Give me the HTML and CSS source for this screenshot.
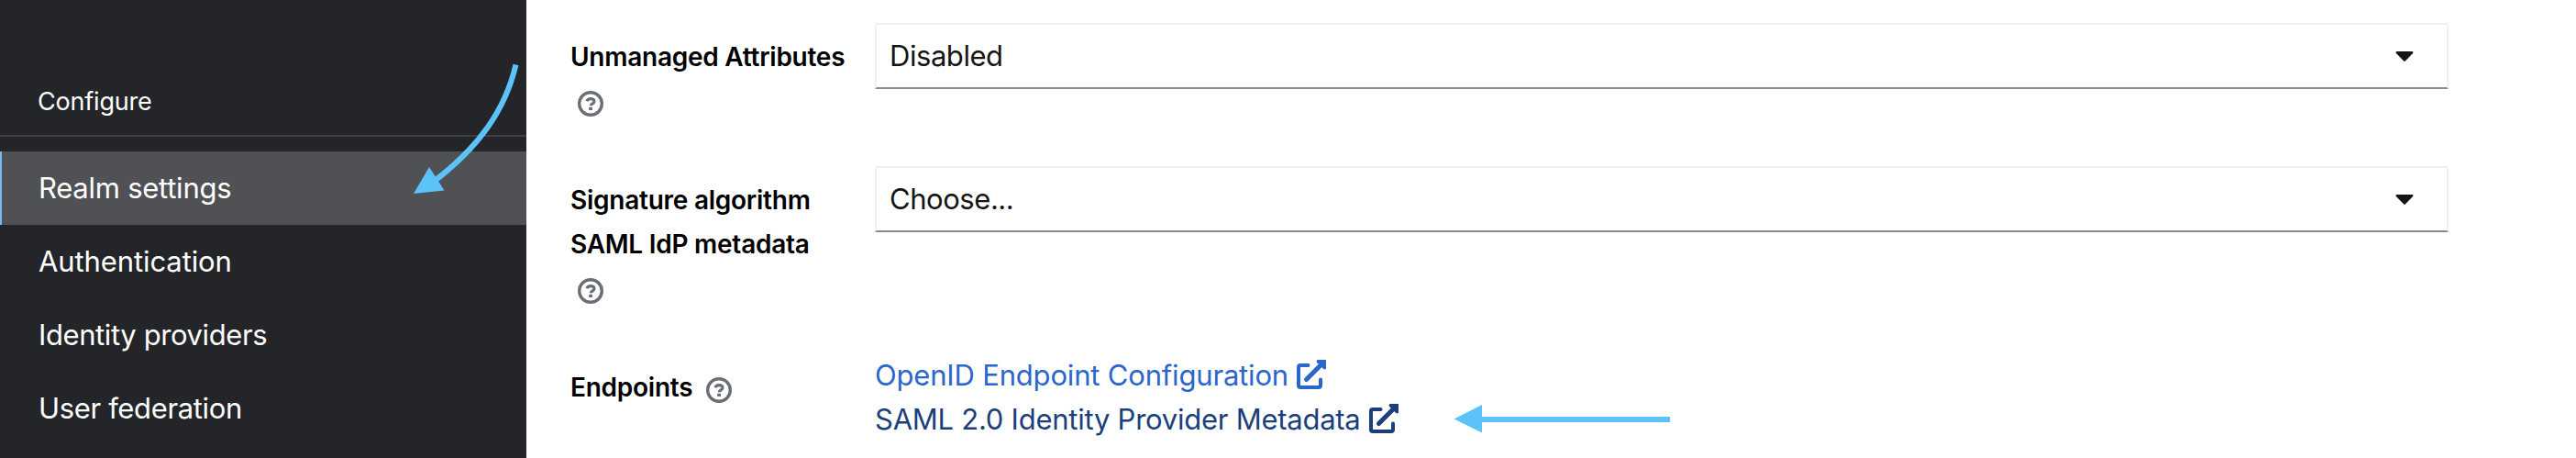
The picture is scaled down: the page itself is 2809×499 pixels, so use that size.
FILE: index.html
```html
<!DOCTYPE html>
<html lang="en">
<head>
    <meta charset="UTF-8">
    <meta name="viewport" content="width=device-width, initial-scale=1.0">
    <title>Realm settings</title>
    <link rel="stylesheet" href="styles.css">
</head>
<body>
    <!-- Shared icons -->
    <svg class="sprite" width="0" height="0">
        <symbol id="icon-help" viewBox="0 0 28 28">
            <circle cx="14" cy="14" r="12.3" fill="none" stroke="currentColor" stroke-width="3.4"/>
            <path d="M10 11.2C10.6 9.4 12 8.6 14 8.6c2.300 0 4 1.100 4 2.900 0 2.400-3.700 2.300-3.700 4.800" fill="none" stroke="currentColor" stroke-width="3.200"/>
            <rect x="12.200" y="17.700" width="3.800" height="3.400" rx="0.600" fill="currentColor"/>
        </symbol>
        <symbol id="icon-external" viewBox="0 0 32 32">
            <path d="M12.500 6H4a2 2 0 0 0-2 2v20a2 2 0 0 0 2 2h20a2 2 0 0 0 2-2v-6.500" fill="none" stroke="currentColor" stroke-width="4" stroke-linecap="round"/>
            <path d="M10.500 21.500L26 6" fill="none" stroke="currentColor" stroke-width="5" stroke-linecap="round"/>
            <path d="M22.500 0H32v9.500q-1.500 1.700-3 .2L22 3q-1.200-1.800.5-3z" fill="currentColor"/>
        </symbol>
        <symbol id="icon-caret" viewBox="0 0 20 12">
            <path d="M1.500 1h17q1.500.8.6 2L10.800 11.400q-.8.9-1.600 0L.9 3Q0 1.800 1.500 1z" fill="currentColor"/>
        </symbol>
    </svg>

    <div class="page">
        <nav class="sidebar">
            <h2 class="nav-title">Configure</h2>
            <ul class="nav-list">
                <li class="nav-item active">Realm settings</li>
                <li class="nav-item auth">Authentication</li>
                <li class="nav-item idp">Identity providers</li>
                <li class="nav-item federation">User federation</li>
            </ul>
        </nav>

        <main class="content">
            <div class="form-group">
                <div class="form-label">Unmanaged Attributes <svg class="help"><use href="#icon-help"/></svg></div>
                <div class="select">Disabled<svg class="caret"><use href="#icon-caret"/></svg></div>
            </div>
            <div class="form-group">
                <div class="form-label">Signature algorithm SAML IdP metadata <svg class="help"><use href="#icon-help"/></svg></div>
                <div class="select">Choose...<svg class="caret"><use href="#icon-caret"/></svg></div>
            </div>
            <div class="form-group">
                <div class="form-label">Endpoints <svg class="help"><use href="#icon-help"/></svg></div>
                <div class="links">
                    <a class="link openid">OpenID Endpoint Configuration<svg class="external"><use href="#icon-external"/></svg></a>
                    <a class="link hovered">SAML 2.0 Identity Provider Metadata<svg class="external"><use href="#icon-external"/></svg></a>
                </div>
            </div>
        </main>

        <!-- Annotation arrows -->
        <svg class="arrows" viewBox="0 0 2809 499">
            <path class="shaft" d="M562.500 70.500C551 120 522 160 474 197"/>
            <path class="head" d="M451 211L468 182L484.500 207.500z"/>
            <path class="shaft" d="M1821 457H1612"/>
            <path class="head" d="M1585.500 456.500L1616 441V471.500z"/>
        </svg>
    </div>
</body>
</html>
```
FILE: styles.css
```css
* {
    box-sizing: border-box;
}
body {
    margin: 0;
    font-family: Inter, "Liberation Sans", sans-serif;
    font-size: 31px;
    line-height: 48px;
    letter-spacing: -0.25px;
    color: #151515;
    background-color: #fff;
}
.sprite {
    position: absolute;
}
.page {
    position: relative;
    display: flex;
    height: 499px;
    overflow: hidden;
}

/* Sidebar */
.sidebar {
    width: 574px;
    flex-shrink: 0;
    background-color: #242529;
    color: #fff;
}
.nav-title {
    margin: 0;
    padding: 87px 41px 12px;
    height: 149px;
    border-bottom: 2px solid #3e3f43;
    font-size: 27px;
    font-weight: 400;
    letter-spacing: -0.2px;
}
.nav-list {
    list-style: none;
    margin: 16px 0 0;
    padding: 0;
}
.nav-item {
    height: 80px;
    padding: 16px 42px;
}
.nav-item.active {
    background-color: #505155;
    border-left: 2px solid #7db8f5;
    padding-left: 40px;
}
.auth {
    letter-spacing: -0.1px;
}
.idp {
    letter-spacing: -0.4px;
}
.federation {
    letter-spacing: -0.35px;
}

/* Form */
.content {
    flex: 1;
    padding: 25px 139px 0 48px;
    display: flex;
    flex-direction: column;
    gap: 47px;
}
.form-group {
    display: grid;
    grid-template-columns: 300px 1fr;
    column-gap: 32px;
    align-items: start;
}
.form-label {
    padding-top: 13px;
    font-size: 28px;
    font-weight: 600;
    color: #000;
}
.help {
    width: 28px;
    height: 28px;
    margin: 0 8px;
    vertical-align: -7px;
    color: #6b6e74;
}
.select {
    display: flex;
    justify-content: space-between;
    align-items: center;
    height: 72px;
    padding: 0 36px 0 14px;
    border: 2px solid #f0f0f0;
    border-bottom-color: #8a8b90;
    letter-spacing: -0.45px;
}
.caret {
    width: 20px;
    height: 12px;
}
.links {
    display: flex;
    flex-direction: column;
}
.link {
    color: #2b66cc;
}
.link.openid {
    letter-spacing: -0.18px;
}
.link.hovered {
    color: #1a3f7c;
}
.external {
    width: 32px;
    height: 32px;
    margin-left: 9px;
    vertical-align: -4px;
}

.arrows {
    position: absolute;
    top: 0;
    left: 0;
    width: 2809px;
    height: 499px;
    pointer-events: none;
}
.shaft {
    fill: none;
    stroke: #5bc3f8;
    stroke-width: 6px;
}
.head {
    fill: #5bc3f8;
}
```
